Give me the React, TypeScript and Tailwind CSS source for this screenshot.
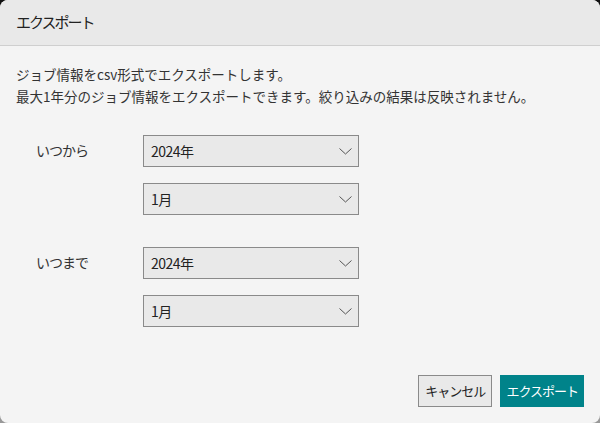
import React from 'react';

const font = { fontFamily: '"Noto Sans CJK JP", "Noto Sans", sans-serif' };

const Chevron = () => (
  <svg width="13" height="7" viewBox="0 0 13 7" fill="none" className="text-[#555]">
    <polyline points="0.5,0.5 6.5,6 12.5,0.5" stroke="currentColor" strokeWidth="1" />
  </svg>
);

const Select = ({ value }: { value: string }) => (
  <div className="w-[216px] h-[32px] border border-[#8a8a8a] bg-[#e9e9e9] flex items-center justify-between pl-[7px] pr-[6px] text-[14px] text-[#222] tracking-[-0.5px]">
    <span>{value}</span>
    <Chevron />
  </div>
);

const RangeRow = ({ label }: { label: string }) => (
  <div className="flex">
    <div className="w-[143px] shrink-0 pl-[36px] pt-[5px] text-[14px] text-[#333] tracking-[-1px]">{label}</div>
    <div className="flex flex-col gap-[16px]">
      <Select value="2024年" />
      <Select value="1月" />
    </div>
  </div>
);

export default function App() {
  return (
    <div className="w-[600px] h-[423px] bg-gradient-to-b from-[#111] to-[#999]" style={font}>
      <div className="w-full h-full rounded-[8px] overflow-hidden bg-[#f4f4f4] flex flex-col">
        <div className="h-[46px] bg-[#e9e9e9] border-b border-[#cfcfcf] flex items-center px-[16px] text-[15px] text-[#222] tracking-[-2px]">
          エクスポート
        </div>
        <div className="px-[16px] pt-[17px] text-[13.5px] leading-[22px] text-[#333]">
          <p>ジョブ情報をcsv形式でエクスポートします。</p>
          <p>最大1年分のジョブ情報をエクスポートできます。絞り込みの結果は反映されません。</p>
        </div>
        <div className="flex flex-col gap-[32px] mt-[28px]">
          <RangeRow label="いつから" />
          <RangeRow label="いつまで" />
        </div>
        <div className="flex justify-end gap-[8px] mt-auto mb-[16px] mr-[16px]">
          <button className="h-[32px] px-[6px] border border-[#8a8a8a] bg-[#e9e9e9] text-[13px] text-[#222] tracking-[-1px]">
            キャンセル
          </button>
          <button className="h-[32px] px-[6px] bg-[#00838a] text-[13px] text-white tracking-[-1px]">
            エクスポート
          </button>
        </div>
      </div>
    </div>
  );
}
